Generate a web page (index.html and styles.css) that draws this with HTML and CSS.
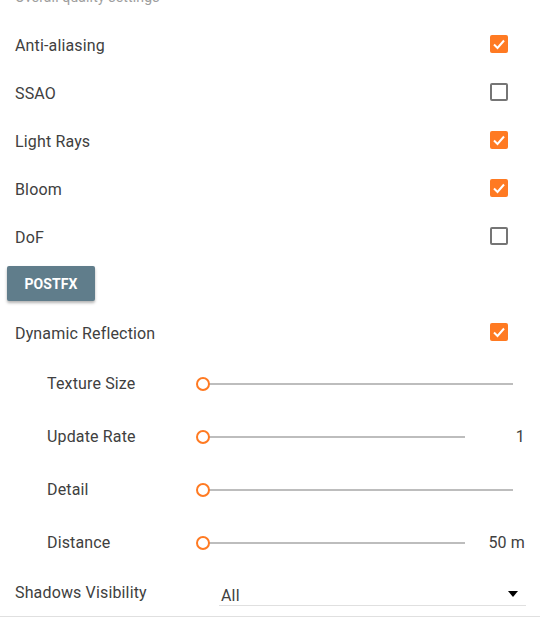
FILE: index.html
```html
<!DOCTYPE html>
<html>
<head>
<meta charset="utf-8">
<link rel="stylesheet" href="styles.css">
</head>
<body>
<div class="panel">
  <div class="subtitle">Overall quality settings</div>

  <div class="row"><span class="label">Anti-aliasing</span><span class="cb on"><svg viewBox="0 0 18 18" width="18" height="18"><polyline points="4,9.5 7.5,13 14,5.5" fill="none" stroke="#fff" stroke-width="2"/></svg></span></div>
  <div class="row"><span class="label">SSAO</span><span class="cb off"></span></div>
  <div class="row"><span class="label">Light Rays</span><span class="cb on"><svg viewBox="0 0 18 18" width="18" height="18"><polyline points="4,9.5 7.5,13 14,5.5" fill="none" stroke="#fff" stroke-width="2"/></svg></span></div>
  <div class="row"><span class="label">Bloom</span><span class="cb on"><svg viewBox="0 0 18 18" width="18" height="18"><polyline points="4,9.5 7.5,13 14,5.5" fill="none" stroke="#fff" stroke-width="2"/></svg></span></div>
  <div class="row"><span class="label">DoF</span><span class="cb off"></span></div>

  <div class="btnwrap"><button class="btn">POSTFX</button></div>

  <div class="row"><span class="label">Dynamic Reflection</span><span class="cb on"><svg viewBox="0 0 18 18" width="18" height="18"><polyline points="4,9.5 7.5,13 14,5.5" fill="none" stroke="#fff" stroke-width="2"/></svg></span></div>

  <div class="srow"><span class="slabel">Texture Size</span><div class="slider"><span class="track"></span><span class="thumb"></span></div></div>
  <div class="srow hasval"><span class="slabel">Update Rate</span><div class="slider"><span class="track"></span><span class="thumb"></span></div><span class="val">1</span></div>
  <div class="srow"><span class="slabel">Detail</span><div class="slider"><span class="track"></span><span class="thumb"></span></div></div>
  <div class="srow hasval"><span class="slabel">Distance</span><div class="slider"><span class="track"></span><span class="thumb"></span></div><span class="val">50 m</span></div>

  <div class="selrow">
    <span class="sellabel">Shadows Visibility</span>
    <div class="select"><span class="seltext">All</span><span class="arrow"></span></div>
  </div>
</div>
</body>
</html>
```
FILE: styles.css
```css
* { box-sizing: border-box; }
html, body { margin: 0; padding: 0; background: #fff; }
body {
  font-family: Roboto, "Liberation Sans", Arial, sans-serif;
  font-size: 16px;
  color: #404040;
  letter-spacing: 0.15px;
  overflow: hidden;
}
.panel { width: 540px; }
.subtitle {
  margin-top: -13px;
  height: 20px;
  line-height: 20px;
  margin-bottom: 14px;
  padding-left: 15px;
  font-size: 14px;
  color: #9e9e9e;
}
.row {
  height: 48px;
  display: flex;
  align-items: center;
  justify-content: space-between;
  padding: 0 32px 0 15px;
}
.cb {
  width: 18px;
  height: 18px;
  border-radius: 2px;
  display: block;
  margin-top: -2px;
}
.cb svg { display: block; }
.cb.on { background: #ff7a22; }
.cb.off { border: 2px solid #757575; }
.btnwrap { padding: 5px 0 8px 7px; }
.btn {
  display: block;
  width: 88px;
  height: 35px;
  border: none;
  border-radius: 2px;
  background: #607d8b;
  color: #fff;
  font-family: Roboto, "Liberation Sans", Arial, sans-serif;
  font-weight: 700;
  font-size: 14px;
  letter-spacing: 0.1px;
  box-shadow: 0 2px 3px rgba(0,0,0,0.3);
  padding: 0;
}
.srow {
  height: 53px;
  display: flex;
  align-items: center;
  padding: 0 27px 0 47px;
}
.srow.hasval { padding-right: 15px; }
.slabel { width: 156px; flex: none; }
.slider {
  position: relative;
  flex: 1;
  height: 2px;
}
.track { display: block; height: 2px; background: #bdbdbd; }
.thumb {
  position: absolute;
  left: -7px;
  top: -6px;
  width: 14px;
  height: 14px;
  border: 2px solid #ff7a22;
  border-radius: 50%;
  background: #fff;
}
.val { width: 60px; flex: none; text-align: right; }
.selrow {
  height: 48px;
  display: flex;
  align-items: center;
  padding: 0 14px 0 15px;
  border-bottom: 1px solid #e0e0e0;
}
.sellabel { width: 204px; flex: none; }
.select {
  flex: 1;
  height: 24px;
  margin-top: 3px;
  display: flex;
  align-items: center;
  justify-content: space-between;
  border-bottom: 1px solid #e0e0e0;
  padding: 3px 8px 0 2px;
}
.arrow {
  width: 0;
  height: 0;
  border-left: 5px solid transparent;
  border-right: 5px solid transparent;
  border-top: 6px solid #000;
  margin-top: -3px;
}
```
